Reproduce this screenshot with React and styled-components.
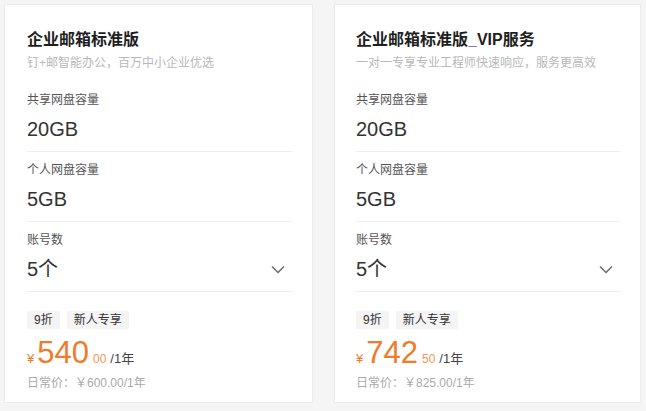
import React from 'react';
import styled, { createGlobalStyle } from 'styled-components';

const GlobalStyle = createGlobalStyle`
  html, body {
    margin: 0;
    padding: 0;
    background: #f5f5f5;
  }
  body {
    font-family: "Liberation Sans", "Noto Sans CJK SC", sans-serif;
  }
`;

const Page = styled.div`
  display: grid;
  grid-template-columns: 309px 307px;
  column-gap: 21px;
  padding: 4px 0 8px 4px;
  width: 646px;
  height: 411px;
  box-sizing: border-box;
`;

const Card = styled.div`
  background: #fff;
  border: 1px solid #ececec;
  box-sizing: border-box;
  padding: 24px 20px 0 ${(p) => p.$left}px;
  display: flex;
  flex-direction: column;
`;

const Title = styled.div`
  font-size: 16px;
  line-height: 22px;
  font-weight: bold;
  color: #1e1e1e;
`;

const Subtitle = styled.div`
  margin-top: 3px;
  font-size: 12px;
  line-height: 18px;
  color: #b8b8b8;
  margin-bottom: 10px;
`;

const Section = styled.div`
  padding: 9px 0 8px;
  border-bottom: 1px solid #efefef;
`;

const Label = styled.div`
  font-size: 12px;
  line-height: 18px;
  color: #555;
`;

const ValueRow = styled.div`
  margin-top: 6px;
  display: flex;
  align-items: center;
  justify-content: space-between;
  font-size: 20px;
  line-height: 28px;
  color: #333;

  svg {
    margin-right: 7px;
  }
`;

const Tags = styled.div`
  display: flex;
  gap: 7px;
  margin-top: 19px;
`;

const Tag = styled.span`
  font-size: 12px;
  line-height: 18px;
  padding: 0 7px;
  background: #f4f4f4;
  color: #333;
`;

const PriceRow = styled.div`
  margin-top: 6px;
  height: 36px;
  display: flex;
  align-items: baseline;
  color: #ef7b2b;
`;

const Small = styled.span`
  font-size: ${(p) => p.$size || 12}px;
  line-height: 1;
  margin-left: ${(p) => p.$ml || 0}px;
  color: ${(p) => p.$color || 'inherit'};
`;

const Big = styled.span`
  font-size: 31px;
  line-height: 36px;
  margin-left: 3px;
`;

const Daily = styled.div`
  margin-top: 3px;
  font-size: 12px;
  line-height: 18px;
  color: #aaa;
`;

const Chevron = () => (
  <svg width="14" height="9" viewBox="0 0 14 9">
    <path d="M1 1.5 L7 7.5 L13 1.5" fill="none" stroke="#666" strokeWidth="1.3" />
  </svg>
);

const plans = [
  {
    title: '企业邮箱标准版',
    sub: '钉+邮智能办公，百万中小企业优选',
    big: '540',
    cents: '00',
    daily: '￥600.00/1年',
    left: 22,
  },
  {
    title: '企业邮箱标准版_VIP服务',
    sub: '一对一专享专业工程师快速响应，服务更高效',
    big: '742',
    cents: '50',
    daily: '￥825.00/1年',
    left: 21,
  },
];

function PlanCard({ plan }) {
  return (
    <Card $left={plan.left}>
      <Title>{plan.title}</Title>
      <Subtitle>{plan.sub}</Subtitle>
      <Section>
        <Label>共享网盘容量</Label>
        <ValueRow>20GB</ValueRow>
      </Section>
      <Section>
        <Label>个人网盘容量</Label>
        <ValueRow>5GB</ValueRow>
      </Section>
      <Section>
        <Label>账号数</Label>
        <ValueRow>
          <span>5个</span>
          <Chevron />
        </ValueRow>
      </Section>
      <Tags>
        <Tag>9折</Tag>
        <Tag>新人专享</Tag>
      </Tags>
      <PriceRow>
        <Small $size={13}>¥</Small>
        <Big>{plan.big}</Big>
        <Small $ml={4} $color="#f29655">{plan.cents}</Small>
        <Small $ml={4} $size={13} $color="#444">/1年</Small>
      </PriceRow>
      <Daily>日常价：{plan.daily}</Daily>
    </Card>
  );
}

export default function App() {
  return (
    <>
      <GlobalStyle />
      <Page>
        {plans.map((p) => (
          <PlanCard key={p.title} plan={p} />
        ))}
      </Page>
    </>
  );
}
